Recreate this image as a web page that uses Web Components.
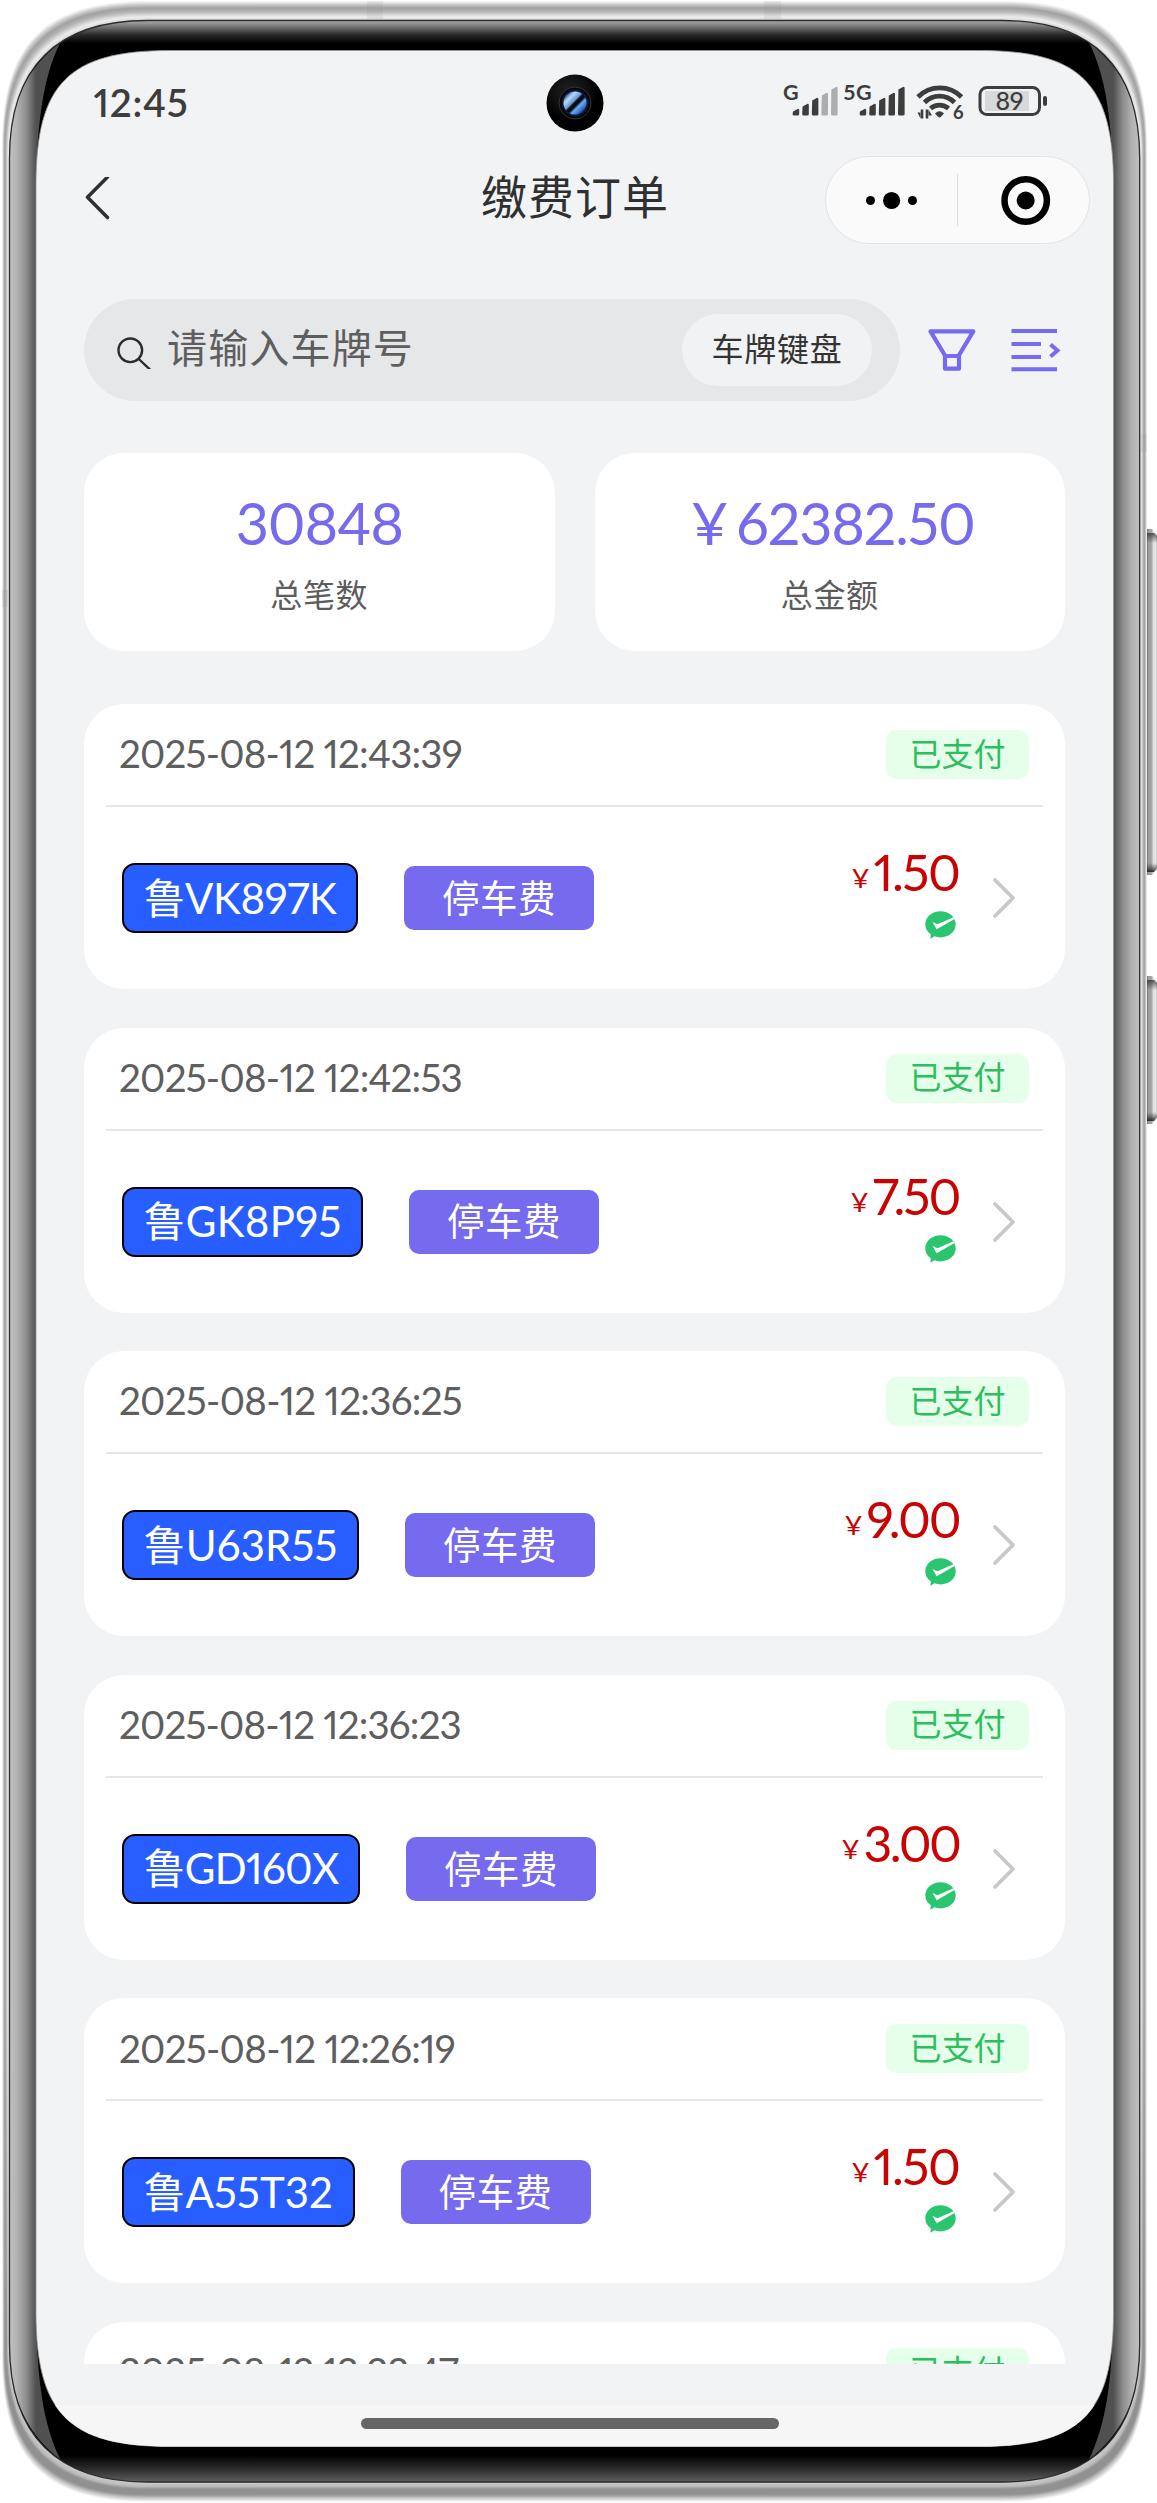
<!DOCTYPE html>
<html lang="zh-CN">
<head>
<meta charset="utf-8">
<title>缴费订单</title>
<style>
html,body{margin:0;background:#fff}
body{width:1157px;height:2503px;overflow:hidden;font-family:Lato,"Noto Sans CJK SC",sans-serif;font-variant-numeric:proportional-nums}
</style>
</head>
<body>
<phone-shell>
  <status-bar></status-bar>
  <nav-bar>缴费订单</nav-bar>
  <search-bar></search-bar>
  <stats-row>
    <stat-card value="30848" w="167">总笔数</stat-card>
    <stat-card value="¥ 62382.50" w="284" shift="6">总金额</stat-card>
  </stats-row>
  <order-list></order-list>
  <home-bar></home-bar>
</phone-shell>
<script>
const define = (name, html, init) => customElements.define(name, class extends HTMLElement {
  connectedCallback() {
    if (this.shadowRoot) return;
    const root = this.attachShadow({ mode: 'open' });
    root.innerHTML = typeof html === 'function' ? html(this) : html;
    if (init) init(this, root);
  }
});

/* Single-line text spread to an exact advance width. */
define('fit-text', '<style>:host{display:block;white-space:pre;flex:none}span{display:inline-block}</style><span><slot></slot></span>', (el, root) => {
  const s = root.querySelector('span');
  const w = +el.getAttribute('w');
  const n = [...el.textContent].length;
  s.style.letterSpacing = (w - s.getBoundingClientRect().width) / n + 'px';
  el.style.width = w + 'px';
});

/* Rounded outline with continuous corners. */
const outline = (l, t, r, b, a, k) =>
  `M${l},${t + a}C${l},${t + k} ${l + k},${t} ${l + a},${t}L${r - a},${t}C${r - k},${t} ${r},${t + k} ${r},${t + a}L${r},${b - a}C${r},${b - k} ${r - k},${b} ${r - a},${b}L${l + a},${b}C${l + k},${b} ${l},${b - k} ${l},${b - a}Z`;

const ramp = (stops, t) => {
  for (let i = 1; i < stops.length; i++) if (t <= stops[i][0]) {
    const [a, x] = stops[i - 1], [b, y] = stops[i];
    const v = Math.round(x + (y - x) * (t - a) / (b - a));
    return `rgb(${v},${v},${v})`;
  }
};

const metal = () => {
  const O = [2, 1, 1147, 2502, 145, 42], I = [9.5, 20.5, 1139.7, 2482, 138, 47];
  const top = [[0, 248], [.15, 205], [.33, 162], [.5, 178], [.8, 238], [1, 205]];
  const bot = [[0, 250], [.2, 190], [.35, 145], [.62, 145], [.75, 185], [.92, 200], [1, 160]];
  let a = '', b = '';
  for (let i = 0; i <= 24; i++) {
    const t = i / 24, p = outline(...O.map((v, j) => v + (I[j] - v) * t));
    a += `<path d="${p}" fill="${ramp(top, t)}"/>`;
    b += `<path d="${p}" fill="${ramp(bot, t)}"/>`;
  }
  return a + `<g mask="url(#low)">${b}</g>`;
};

const side = 'M9,150C10,100 30,65 60,43C44,75 37,120 36,190L36,2310C37,2385 44,2425 60,2459C30,2437 10,2400 9,2350Z';

define('phone-shell', () => `<style>
:host{display:block;position:relative;width:1157px;height:2503px}
svg{position:absolute;left:0;top:0}
main{box-sizing:border-box;position:relative;margin-left:36px;width:1077.5px;height:2503px;padding-top:50px;display:flex;flex-direction:column;
clip-path:path("${outline(0, 50.5, 1077.5, 2446.5, 134, 33)}")}
</style>
<svg width="1157" height="2503" viewBox="0 0 1157 2503">
<defs>
<linearGradient id="ml" x1="0" y1="0" x2="0" y2="1"><stop offset=".8" stop-color="#000"/><stop offset=".96" stop-color="#fff"/></linearGradient>
<mask id="low"><rect width="1157" height="2503" fill="url(#ml)"/></mask>
<linearGradient id="bz" gradientUnits="userSpaceOnUse" x1="0" y1="20" x2="0" y2="2482"><stop offset="0" stop-color="#b4b4b4"/><stop offset=".0028" stop-color="#727272"/><stop offset=".006" stop-color="#2a2a2a"/><stop offset=".0095" stop-color="#000"/><stop offset=".989" stop-color="#000"/><stop offset=".995" stop-color="#2e2e2e"/><stop offset="1" stop-color="#606060"/></linearGradient>
<linearGradient id="sd" gradientUnits="userSpaceOnUse" x1="9" y1="0" x2="36" y2="0"><stop offset="0" stop-color="#c2c2c2"/><stop offset=".3" stop-color="#b2b2b2"/><stop offset=".65" stop-color="#8c8c8c"/><stop offset="1" stop-color="#505050"/></linearGradient>
<linearGradient id="bt" x1="0" y1="0" x2="1" y2="0"><stop offset="0" stop-color="#777"/><stop offset=".15" stop-color="#9a9a9a"/><stop offset=".5" stop-color="#aaa"/><stop offset=".6" stop-color="#ddd"/><stop offset=".9" stop-color="#e8e8e8"/><stop offset="1" stop-color="#bbb"/></linearGradient>
<linearGradient id="be" x1="0" y1="0" x2="0" y2="1"><stop offset="0" stop-color="#333" stop-opacity=".8"/><stop offset="1" stop-color="#333" stop-opacity="0"/></linearGradient>
<linearGradient id="bf" x1="0" y1="1" x2="0" y2="0"><stop offset="0" stop-color="#111" stop-opacity=".85"/><stop offset="1" stop-color="#333" stop-opacity="0"/></linearGradient>
<clipPath id="in"><path d="${outline(9.5, 20.5, 1139.7, 2482, 138, 47)}"/></clipPath>
</defs>
<g><path d="M1147,529h5l5,5v336l-5,5h-5z" fill="url(#bt)"/><path d="M1147,533h7l3,3v7h-10z" fill="url(#be)"/><path d="M1147,863h10v5l-3,4h-7z" fill="url(#bf)"/>
<path d="M1147,976h5l5,5v138l-5,5h-5z" fill="url(#bt)"/><path d="M1147,980h7l3,3v7h-10z" fill="url(#be)"/><path d="M1147,1112h10v5l-3,4h-7z" fill="url(#bf)"/></g>
${metal()}
<g fill="#888" opacity=".13"><path d="M367,1h16v18h-16zM764,1h17v18h-17zM1141,434h6v18h-6zM2,590h6v17h-6z"/></g>
<path d="${outline(9.5, 20.5, 1139.7, 2482, 138, 47)}" fill="url(#bz)"/>
<g clip-path="url(#in)"><path d="${side}" fill="url(#sd)"/><path d="${side}" transform="translate(1149.3 0) scale(-1 1)" fill="url(#sd)"/></g>
<path d="${outline(9.5, 20.5, 1139.7, 2482, 138, 47)}" fill="none" stroke="#2c2c2c" stroke-width="1.3"/>
<path d="${outline(36, 50.5, 1113.5, 2446.5, 134, 33)}" fill="#f1f3f5" stroke="#999" stroke-width=".8"/>
</svg>
<main><slot></slot></main>`);

const bars = (x, dim) => [6.5, 11.5, 17.5, 22.5, 28.5].map((h, i) =>
  `<path d="M${x + i * 9.6},${116.5 - h + 2.5}l5,-2.8q1.2,0 1.2,1.4V115q0,1.5 -1.5,1.5h-3.6q-1.5,0 -1.5,-1.5z" fill="${i > dim ? '#acadaf' : '#3d3d3d'}"/>`).join('');

define('status-bar', `<style>
:host{display:flex;align-items:center;height:106px;padding:0 65.500px 0 57.500px;color:#3d3d3d;font-size:38.500px;font-weight:600;line-height:1}
svg{display:block;flex:none}
.time{width:452.500px;display:flex;margin-top:-2px}
.sig{margin-left:auto}
text{font-family:Lato,sans-serif;font-weight:700}
</style>
<div class="time"><fit-text w="95">12:45</fit-text></div>
<svg width="58" height="58" viewBox="-29 -29 58 58">
<defs><radialGradient id="c" cx=".4" cy=".3"><stop offset="0" stop-color="#222"/><stop offset=".7" stop-color="#0c0c0c"/><stop offset="1" stop-color="#000"/></radialGradient>
<linearGradient id="l" x1="0" y1="0" x2="1" y2="1"><stop offset=".1" stop-color="#223d70"/><stop offset=".27" stop-color="#b9d9f8"/><stop offset=".43" stop-color="#6b9bd0"/><stop offset=".49" stop-color="#060a14"/><stop offset=".57" stop-color="#060a14"/><stop offset=".65" stop-color="#67aaf5"/><stop offset=".78" stop-color="#3b74c4"/><stop offset=".9" stop-color="#0a1a38"/></linearGradient></defs>
<circle r="28.5" fill="url(#c)"/><circle r="16" fill="#050608" stroke="#343434" stroke-width="1"/><circle r="13.5" fill="#0a1740"/><circle r="11.5" fill="url(#l)"/></svg>
<svg class="sig" width="268" height="62" viewBox="780 73 268 62" fill="#3d3d3d">
<text x="783" y="100.5" font-size="21.500">G</text>${bars(793, 2)}
<text x="843.500" y="100.5" font-size="21.5" textLength="28">5G</text>${bars(860, 4)}
<g fill="none" stroke="#3d3d3d" stroke-width="4.800"><path d="M918,98A30.5,30.5 0 0 1 961.500,98"/><path d="M924.500,103.500A21,21 0 0 1 954.500,103.500"/><path d="M930.500,109.500A13.500,13.500 0 0 1 948.500,109.500"/></g>
<path d="M935,114.500Q939.500,110 944,114.500L941,117.800Q939.500,119 938,117.800Z"/>
<path d="M922,110.500v9M927,119.500V110.500" stroke="#3d3d3d" stroke-width="2.600"/><path d="M917.500,113.500h3v6zM932,116.500h-3.500v-6z"/>
<text x="953" y="119.500" font-size="18.500">6</text>
<rect x="980" y="88.500" width="59.500" height="27" rx="7" fill="none" stroke="#3d3d3d" stroke-width="3"/><rect x="985" y="92" width="44" height="20" fill="#d8d9db"/><rect x="1043" y="97" width="4" height="10" rx="2"/>
<text x="995.500" y="111" font-size="25" style="font-weight:500" textLength="28">89</text>
</svg>`);

define('nav-bar', `<style>
:host{display:flex;align-items:center;height:88px;padding:0 23.500px 0 49px;color:#303030;font-size:46px;line-height:1}
svg{display:block}.t{flex:1;padding-left:370px;margin-top:-7px}
.cap{box-sizing:border-box;width:265px;height:88px;border:1px solid #e2e3e5;border-radius:44px;background:#fafafa}
</style>
<svg width="26" height="46" viewBox="85 174.500 26 46"><path d="M107.500,177L87.500,197.300L107.500,217.500" fill="none" stroke="#2d2f31" stroke-width="3.500" stroke-linecap="round" stroke-linejoin="round" transform="translate(0 -2.500)"/></svg>
<div class="t"><fit-text w="188">缴费订单</fit-text></div>
<div class="cap"><svg width="263" height="86" viewBox="826 157 263 86"><circle cx="870.500" cy="200.500" r="4.500"/><circle cx="891.600" cy="200.500" r="8.600"/><circle cx="912.500" cy="200.500" r="4.500"/><path d="M957.500,174v52" stroke="#dcdcdc"/><circle cx="1025.700" cy="200.500" r="21.200" fill="none" stroke="#000" stroke-width="6.500"/><circle cx="1025.700" cy="200.500" r="9"/></svg></div>`);

define('search-bar', `<style>
:host{display:flex;align-items:center;margin:55px 40px 0 48px;height:102px;line-height:1}
.box{flex:none;box-sizing:border-box;width:816px;height:102px;border-radius:51px;background:#e6e7e9;display:flex;align-items:center;padding:0 28px 0 31px;color:#5e5e5e;font-size:40px}
.hint{margin:-4px 0 0 14px}
.btn{margin-left:auto;width:190px;height:72px;border-radius:36px;background:#f1f2f4;color:#333;font-size:32px;display:flex;justify-content:center;align-items:center}
.btn fit-text{margin-top:-3px}
svg{display:block;flex:none}
</style>
<div class="box"><svg width="38" height="38" viewBox="114 330 38 38"><g fill="none" stroke="#2c2c2c" stroke-width="2.400"><circle cx="129.300" cy="349.300" r="11.800"/><path d="M137.800,358L150,369.500"/></g></svg>
<fit-text class="hint" w="247">请输入车牌号</fit-text><div class="btn"><fit-text w="131">车牌键盘</fit-text></div></div>
<svg style="margin-left:26px" width="140" height="46" viewBox="926 327 140 46"><g fill="none" stroke="#766aee" stroke-width="4.200" stroke-linejoin="round"><path d="M930.500,331.300H973.300L958.500,356H945.300Z"/><path d="M945,356V368.700H959V356"/></g><path d="M1011.500,329h45.500v4h-45.500zM1011.500,342h29.500v4h-29.500zM1011.500,355h29.500v4h-29.500zM1011.500,367.300h45.500v4h-45.500z" fill="#766aee"/><path d="M1050.500,344.500L1057.500,350.500L1050.500,356.500" fill="none" stroke="#766aee" stroke-width="4"/></svg>`);

define('stats-row', '<style>:host{display:flex;gap:40px;margin:52px 48.500px 0 48px}</style><slot></slot>');

define('stat-card', el => `<style>
:host{box-sizing:border-box;flex:1;height:198px;border-radius:40px;background:#fff;display:flex;flex-direction:column;align-items:center;line-height:1;color:#5c5c5c;font-size:32px;padding-top:41px}
.v{color:#766aee;font-size:57.500px;word-spacing:-5px;padding-left:${el.getAttribute('shift') || 0}px}.l{letter-spacing:.6px;margin-top:27px}
</style><fit-text class="v" w="${el.getAttribute('w')}">${el.getAttribute('value')}</fit-text><div class="l"><slot></slot></div>`);

define('order-card', el => { const [date, dw, plate, pw, price, mw] = el.data; return `<style>
:host{display:block;flex:none;height:285px;border-radius:40px;background:#fff;line-height:1}
.head{box-sizing:border-box;height:101px;margin:0 22px;padding:0 14px 0 13px;display:flex;align-items:center;justify-content:space-between;color:#5e5e5e;font-size:38.500px}
.head>fit-text{margin-top:-2px}
.badge{width:143px;height:49px;border-radius:10px;background:#e6ffea;color:#2dbe60;font-size:32px;display:flex;align-items:center;justify-content:center}
.badge fit-text{margin-top:-2px}
.rule{height:2px;margin:0 22px;background:#e6e6e6}
.body{height:182px;display:flex;align-items:center;padding:0 49.500px 0 38px}
.plate{box-sizing:border-box;width:${pw}px;height:70px;border:2px solid #000;border-radius:13px;background:#285eff;color:#fff;font-size:42px;display:flex;align-items:center;justify-content:center}
.plate fit-text{margin-top:-1px}
.tag{margin-left:46px;width:190px;height:64px;border-radius:10px;background:#766aee;color:#fff;font-size:37.500px;display:flex;align-items:center;justify-content:center}
.tag fit-text{margin-top:-1px}
.money{margin-left:auto;margin-top:-10px;display:flex;flex-direction:column;align-items:flex-end;color:#c80303}
.amt{display:flex;align-items:baseline;font-size:50px}.y{font-size:27.500px;margin-right:4px;transform:translateY(-3px)}
.money svg{margin:14px 4px 0 0}svg{display:block}.go{margin-left:32px}
</style>
<div class="head"><fit-text w="${dw}">${date}</fit-text><div class="badge"><fit-text w="96">已支付</fit-text></div></div>` + (plate ? `
<div class="rule"></div>
<div class="body"><div class="plate"><fit-text w="${pw - 43}">${plate}</fit-text></div><div class="tag"><fit-text w="114">停车费</fit-text></div>
<div class="money"><div class="amt"><span class="y">¥</span><fit-text w="${mw}">${price}</fit-text></div>
<svg width="31" height="28" viewBox="0 0 31 28"><path d="M15.500,.3C24,.3 30.700,6 30.700,13.300C30.700,20.800 24,26.400 15.500,26.400C13.300,26.400 11.300,26 9.500,25.300L5.400,27.800L5.800,23.300C2.200,21 .3,17.500 .3,13.300C.3,6 7,.3 15.500,.3Z" fill="#2bc56f"/><path d="M7.500,11L11.700,18.300L29.500,8L28.500,6.300L12.500,13.300Z" fill="#fff"/></svg></div>
<svg class="go" width="24" height="42" viewBox="0 0 24 42"><path d="M3,3L21,21L3,39" fill="none" stroke="#c8c8c8" stroke-width="3.800" stroke-linecap="round" stroke-linejoin="round"/></svg></div>` : ''); });

define('order-list', `<style>:host{display:flex;flex-direction:column;gap:38.600px;margin:53px 48.500px 0 48px;height:1660px;overflow:hidden;flex:none}</style>`, (el, root) => {
  [['2025-08-12 12:43:39', 343, '鲁VK897K', 236, '1.50', 86],
   ['2025-08-12 12:42:53', 343, '鲁GK8P95', 241, '7.50', 87],
   ['2025-08-12 12:36:25', 343, '鲁U63R55', 237, '9.00', 93],
   ['2025-08-12 12:36:23', 342, '鲁GD160X', 238, '3.00', 96],
   ['2025-08-12 12:26:19', 336, '鲁A55T32', 232.5, '1.50', 86],
   ['2025-08-12 12:22:47', 339]].forEach(d => {
    const c = document.createElement('order-card'); c.data = d; root.append(c);
  });
});

define('home-bar', '<style>:host{display:flex;justify-content:center;align-items:center;margin-top:41px;height:41.500px;background:#f6f6f6;flex:none}div{width:418px;height:10.700px;border-radius:6px;background:#666;margin:-5px 10px 0 0}</style><div></div>');
</script>
</body>
</html>
